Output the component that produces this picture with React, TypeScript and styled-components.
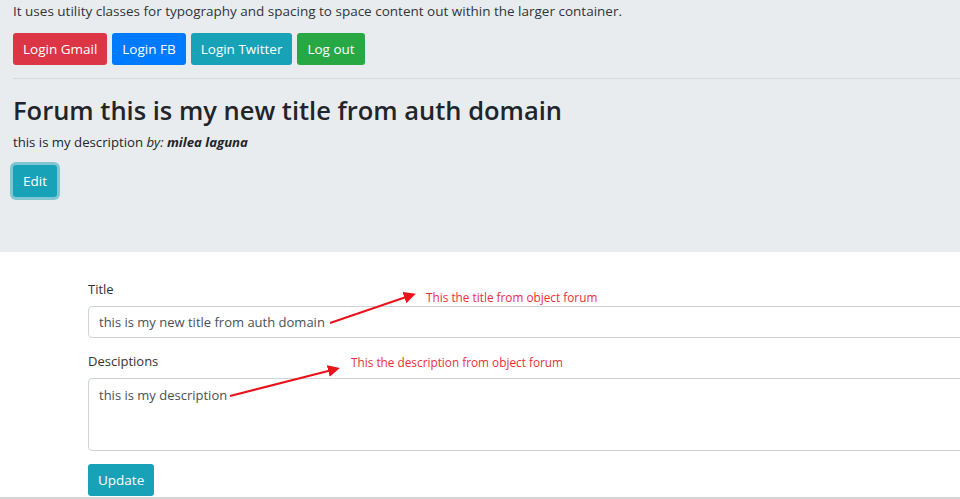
import React from 'react';
import styled, { createGlobalStyle } from 'styled-components';

const GlobalStyle = createGlobalStyle`
  html, body {
    margin: 0;
    padding: 0;
    overflow: hidden;
    background: #ffffff;
    font-family: "Open Sans", "Noto Sans", sans-serif;
    color: #212529;
  }
  * { box-sizing: border-box; }
`;

const Page = styled.div`
  width: 960px;
  height: 499px;
  overflow: hidden;
  position: relative;
  border-bottom: 2px solid #d6d6d6;
`;

const Jumbotron = styled.section`
  background: #e9ecef;
  height: 252px;
  padding: 0 0 0 13px;
`;

const Lead = styled.p`
  margin: 0;
  padding-top: 1px;
  font-size: 13.5px;
  line-height: 20px;
  color: #2f353a;
`;

const ButtonRow = styled.div`
  display: flex;
  gap: 5px;
  margin-top: 12px;
`;

const colors: Record<string, string> = {
  danger: '#dc3545',
  primary: '#007bff',
  info: '#17a2b8',
  success: '#28a745',
};

const Btn = styled.button<{ $variant: string; $focus?: boolean }>`
  height: 32px;
  padding: 0 10px;
  border: none;
  border-radius: 3px;
  background: ${p => colors[p.$variant]};
  color: #fff;
  font-family: "Open Sans", "Noto Sans", sans-serif;
  font-size: 13.5px;
  cursor: pointer;
  box-shadow: ${p => (p.$focus ? '0 0 0 3px rgba(23, 162, 184, 0.5)' : 'none')};
`;

const Rule = styled.hr`
  border: none;
  border-top: 1px solid #d5d9dd;
  margin: 13px 0 0 0;
`;

const Heading = styled.h2`
  margin: 13px 0 0 0;
  font-size: 25.5px;
  font-weight: 600;
  line-height: 36px;
  color: #212529;
`;

const Sub = styled.p`
  margin: 3px 0 0 0;
  font-size: 13.2px;
  line-height: 22px;
  color: #212529;

  em { font-style: italic; }
  strong { font-style: italic; font-weight: 700; }
`;

const EditWrap = styled.div`
  margin-top: 12px;
`;

const FormSection = styled.section`
  position: relative;
  padding: 27px 0 0 88px;
`;

const Field = styled.div`
  margin-bottom: 13px;
`;

const Label = styled.label`
  display: block;
  font-size: 13px;
  line-height: 20px;
  color: #333;
  margin-bottom: 7px;
`;

const Input = styled.input`
  display: block;
  width: 940px;
  height: 32px;
  padding: 0 10px;
  border: 1px solid #ced4da;
  border-radius: 4px;
  font-family: "Open Sans", "Noto Sans", sans-serif;
  font-size: 13px;
  color: #495057;
  background: #fff;
`;

const TextArea = styled.textarea`
  display: block;
  width: 940px;
  height: 73px;
  padding: 6px 10px;
  border: 1px solid #ced4da;
  border-radius: 4px;
  font-family: "Open Sans", "Noto Sans", sans-serif;
  font-size: 13px;
  line-height: 20px;
  color: #495057;
  resize: none;
`;

const Annotations = styled.svg`
  position: absolute;
  left: 0;
  top: 0;
  width: 960px;
  height: 247px;
  pointer-events: none;
`;

const Note = styled.span<{ $x: number; $y: number }>`
  position: absolute;
  left: ${p => p.$x}px;
  top: ${p => p.$y}px;
  font-family: "Open Sans", sans-serif;
  font-size: 11.8px;
  line-height: 14px;
  color: #e8303a;
  white-space: nowrap;
`;

export default function App() {
  return (
    <Page>
      <GlobalStyle />
      <Jumbotron>
        <Lead>
          It uses utility classes for typography and spacing to space content out within the larger container.
        </Lead>
        <ButtonRow>
          <Btn $variant="danger">Login Gmail</Btn>
          <Btn $variant="primary">Login FB</Btn>
          <Btn $variant="info">Login Twitter</Btn>
          <Btn $variant="success">Log out</Btn>
        </ButtonRow>
        <Rule />
        <Heading>Forum this is my new title from auth domain</Heading>
        <Sub>
          this is my description <em>by:</em> <strong>milea laguna</strong>
        </Sub>
        <EditWrap>
          <Btn $variant="info" $focus>Edit</Btn>
        </EditWrap>
      </Jumbotron>
      <FormSection>
        <Field>
          <Label>Title</Label>
          <Input readOnly value="this is my new title from auth domain" />
        </Field>
        <Field>
          <Label>Desciptions</Label>
          <TextArea readOnly value="this is my description" />
        </Field>
        <Btn $variant="info">Update</Btn>
        <Annotations viewBox="0 0 960 247">
          <defs>
            <marker id="head" markerWidth="6" markerHeight="6" refX="4" refY="3" orient="auto" markerUnits="strokeWidth">
              <path d="M0,0 L6,3 L0,6 Z" fill="#e8131b" />
            </marker>
          </defs>
          <line x1="330" y1="71" x2="412" y2="43" stroke="#e8131b" strokeWidth="2" markerEnd="url(#head)" />
          <line x1="230" y1="144" x2="336" y2="117" stroke="#e8131b" strokeWidth="2" markerEnd="url(#head)" />
        </Annotations>
        <Note $x={426} $y={38}>This the title from object forum</Note>
        <Note $x={351} $y={103}>This the description from object forum</Note>
      </FormSection>
    </Page>
  );
}
